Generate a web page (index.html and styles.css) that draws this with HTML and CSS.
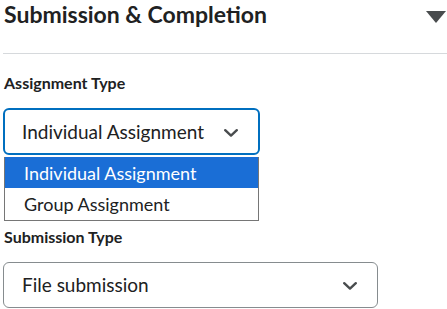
FILE: index.html
```html
<!DOCTYPE html>
<html lang="en">
<head>
<meta charset="utf-8">
<link rel="stylesheet" href="styles.css">
</head>
<body>
<div class="panel">
  <div class="header">
    <h2 class="title">Submission &amp; Completion</h2>
    <svg class="caret" width="20" height="12" viewBox="0 0 20 12"><path d="M0 0 H20 L10 12 Z" fill="#494c4e"/></svg>
  </div>
  <div class="label first">Assignment Type</div>
  <div class="select-wrap">
    <div class="select focused">
      <span class="value">Individual Assignment</span>
      <svg class="chev" width="14" height="8" viewBox="0 0 14 8"><path d="M1.2 1.2 L7 6.6 L12.8 1.2" fill="none" stroke="#494c4e" stroke-width="2.4" stroke-linecap="round" stroke-linejoin="round"/></svg>
    </div>
    <div class="listbox">
      <div class="option selected">Individual Assignment</div>
      <div class="option">Group Assignment</div>
    </div>
  </div>
  <div class="label second">Submission Type</div>
  <div class="select wide">
    <span class="value">File submission</span>
    <svg class="chev" width="14" height="8" viewBox="0 0 14 8"><path d="M1.2 1.2 L7 6.6 L12.8 1.2" fill="none" stroke="#494c4e" stroke-width="2.4" stroke-linecap="round" stroke-linejoin="round"/></svg>
  </div>
</div>
</body>
</html>
```
FILE: styles.css
```css
html, body {
  margin: 0;
  padding: 0;
  background: #ffffff;
}
body {
  font-family: Lato, "Open Sans", sans-serif;
  color: #202122;
  width: 447px;
  height: 309px;
  overflow: hidden;
}
.panel {
  padding-left: 3px;
}
.header {
  display: flex;
  justify-content: space-between;
  align-items: flex-start;
  height: 53px;
  border-bottom: 1px solid #d6d9dc;
}
.title {
  margin: 0;
  padding-left: 1px;
  font-size: 23px;
  line-height: 28px;
  font-weight: 700;
  color: #202122;
}
.caret {
  margin-top: 11px;
  margin-right: 1px;
}
.label {
  font-size: 16px;
  line-height: 20px;
  font-weight: 700;
  color: #202122;
  padding-left: 1px;
}
.label.first {
  margin-top: 19px;
}
.label.second {
  margin-top: 72px;
}
.select-wrap {
  position: relative;
  width: 257px;
  margin-top: 15px;
}
.select {
  box-sizing: border-box;
  display: flex;
  align-items: center;
  justify-content: space-between;
  height: 47px;
  border-radius: 6px;
  font-size: 19px;
  color: #202122;
}
.select.focused {
  width: 257px;
  border: 2px solid #006fbf;
  padding: 0 20px 1px 17px;
}
.select.wide {
  width: 375px;
  height: 46px;
  margin-top: 15px;
  border: 1px solid #868c8f;
  padding: 0 20px 2px 18px;
}
.chev {
  margin-top: 3px;
}
.listbox {
  position: absolute;
  left: 1px;
  top: 49px;
  width: 255px;
  box-sizing: border-box;
  border: 1px solid #767676;
  border-top: none;
  background: #ffffff;
}
.option {
  height: 32px;
  display: flex;
  align-items: center;
  padding-left: 19px;
  font-size: 18px;
  color: #202122;
}
.option.selected {
  background: #1a6ed6;
  color: #ffffff;
  height: 31px;
}
```
